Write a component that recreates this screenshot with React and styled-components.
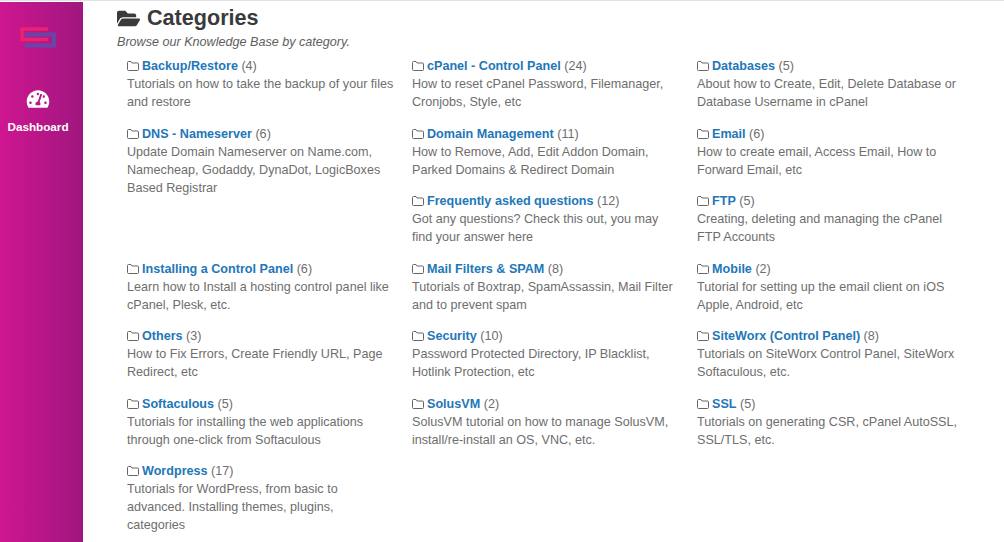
import React from 'react';
import styled, { createGlobalStyle } from 'styled-components';
import { FaFolderOpen, FaTachometerAlt } from 'react-icons/fa';

const GlobalStyle = createGlobalStyle`
  html, body {
    margin: 0;
    padding: 0;
    background: #fff;
    font-family: "Liberation Sans", Arial, sans-serif;
    overflow: hidden;
  }
`;

const Page = styled.div`
  display: flex;
  width: 1004px;
  height: 542px;
  border-top: 1px solid #e2e2e2;
  box-sizing: border-box;
  overflow: hidden;
`;

const Sidebar = styled.aside`
  width: 83px;
  flex: none;
  box-sizing: border-box;
  margin-top: 1px;
  background: linear-gradient(to right, #cf1690, #a0167f);
  display: flex;
  flex-direction: column;
  align-items: center;
  padding: 25px 7px 0 0;
`;

const Logo = styled.svg`
  display: block;
  width: 37px;
  height: 21px;
`;

const NavItem = styled.a`
  display: flex;
  flex-direction: column;
  align-items: center;
  margin-top: 41px;
  color: #fff;
  font-size: 11.7px;
  font-weight: 700;

  svg {
    width: 24px;
    height: 20px;
    margin-bottom: 11px;
  }
`;

const Content = styled.main`
  flex: 1;
  padding: 5px 0 0 34px;
`;

const Title = styled.h1`
  display: flex;
  align-items: center;
  gap: 7px;
  margin: 0;
  color: #3a3a3a;
  font-size: 21.6px;
  line-height: 24px;
  font-weight: 700;

  svg {
    width: 23px;
    height: 21px;
  }
`;

const Lead = styled.p`
  margin: 3px 0 0;
  color: #606060;
  font-size: 12.6px;
  line-height: 18px;
  font-style: italic;
`;

const Grid = styled.div`
  display: grid;
  grid-template-columns: repeat(3, 285px);
  grid-auto-rows: 67.5px;
  margin: 6px 0 0 10px;
`;

const Item = styled.div`
  grid-row: span ${(p) => p.$rows || 1};
  padding-right: 18px;
  color: #6e6e6e;
  font-size: 12.6px;
  line-height: 18px;
`;

const ItemHead = styled.div`
  display: flex;
  align-items: center;
  white-space: pre;
`;

const FolderIcon = styled.svg`
  flex: none;
  width: 12px;
  height: 10px;
  margin-right: 3px;
`;

const ItemLink = styled.a`
  color: #2377b8;
  font-weight: 700;
`;

const categories = [
  ['Backup/Restore', 4, 'Tutorials on how to take the backup of your files and restore'],
  ['cPanel - Control Panel', 24, 'How to reset cPanel Password, Filemanager, Cronjobs, Style, etc'],
  ['Databases', 5, 'About how to Create, Edit, Delete Database or Database Username in cPanel'],
  ['DNS - Nameserver', 6, 'Update Domain Nameserver on Name.com, Namecheap, Godaddy, DynaDot, LogicBoxes Based Registrar', 2],
  ['Domain Management', 11, 'How to Remove, Add, Edit Addon Domain, Parked Domains & Redirect Domain'],
  ['Email', 6, 'How to create email, Access Email, How to Forward Email, etc'],
  ['Frequently asked questions', 12, 'Got any questions? Check this out, you may find your answer here'],
  ['FTP', 5, 'Creating, deleting and managing the cPanel FTP Accounts'],
  ['Installing a Control Panel', 6, 'Learn how to Install a hosting control panel like cPanel, Plesk, etc.'],
  ['Mail Filters & SPAM', 8, 'Tutorials of Boxtrap, SpamAssassin, Mail Filter and to prevent spam'],
  ['Mobile', 2, 'Tutorial for setting up the email client on iOS Apple, Android, etc'],
  ['Others', 3, 'How to Fix Errors, Create Friendly URL, Page Redirect, etc'],
  ['Security', 10, 'Password Protected Directory, IP Blacklist, Hotlink Protection, etc'],
  ['SiteWorx (Control Panel)', 8, 'Tutorials on SiteWorx Control Panel, SiteWorx Softaculous, etc.'],
  ['Softaculous', 5, 'Tutorials for installing the web applications through one-click from Softaculous'],
  ['SolusVM', 2, 'SolusVM tutorial on how to manage SolusVM, install/re-install an OS, VNC, etc.'],
  ['SSL', 5, 'Tutorials on generating CSR, cPanel AutoSSL, SSL/TLS, etc.'],
  ['Wordpress', 17, 'Tutorials for WordPress, from basic to advanced. Installing themes, plugins, categories'],
];

export default function App() {
  return (
    <>
      <GlobalStyle />
      <Page>
        <Sidebar>
          <Logo viewBox="0 0 37 21" fill="none">
            <path d="M5 7.5H34V18.5H5" stroke="#6a45a8" strokeWidth="4" />
            <path d="M28 2H2V12.5H28" stroke="#ec2270" strokeWidth="3.5" />
          </Logo>
          <NavItem>
            <FaTachometerAlt />
            Dashboard
          </NavItem>
        </Sidebar>
        <Content>
          <Title>
            <FaFolderOpen />
            Categories
          </Title>
          <Lead>Browse our Knowledge Base by category.</Lead>
          <Grid>
            {categories.map(([name, count, text, rows]) => (
              <Item key={name} $rows={rows}>
                <ItemHead>
                  <FolderIcon viewBox="0 0 12 10" fill="none">
                    <path d="M.5 8.5V1.5a1 1 0 0 1 1-1h2.5l1 1.5h5.5a1 1 0 0 1 1 1v5.5a1 1 0 0 1-1 1h-9a1 1 0 0 1-1-1z" stroke="#666" />
                  </FolderIcon>
                  <ItemLink>{name}</ItemLink> ({count})
                </ItemHead>
                {text}
              </Item>
            ))}
          </Grid>
        </Content>
      </Page>
    </>
  );
}
